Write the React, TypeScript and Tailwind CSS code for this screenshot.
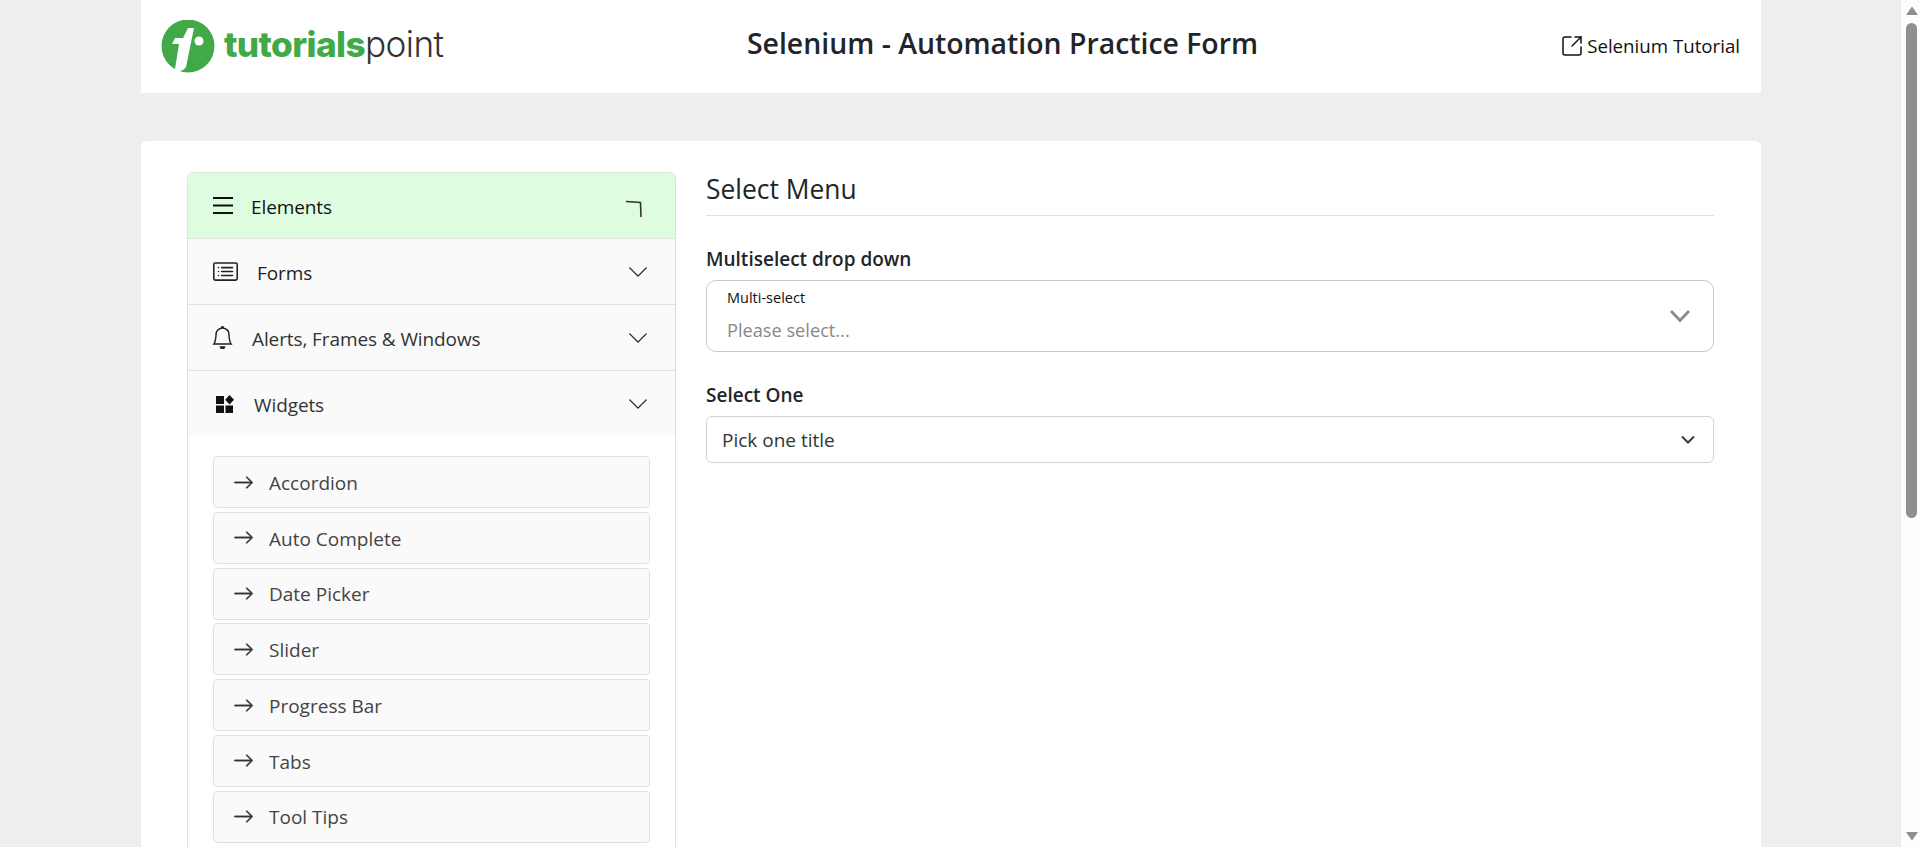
import { BsArrowRight, BsBell, BsCardList, BsChevronDown } from 'react-icons/bs';
import { SquareArrowOutUpRight } from 'lucide-react';
import type { ReactNode } from 'react';

const sans = 'font-["Open_Sans","Noto_Sans",sans-serif]';

const widgets = ['Accordion', 'Auto Complete', 'Date Picker', 'Slider', 'Progress Bar', 'Tabs', 'Tool Tips'];

function Logo() {
  return (
    <div className="flex items-center ml-[20px]">
      <svg width="54" height="53" viewBox="0 0 54 53" className="shrink-0">
        <circle cx="27" cy="26" r="26.5" fill="#41a947" />
        <path d="M27 8 L22 18 L14 18 L11 24 L18 24 L14 49 L16 52 C21 51 24 49 25 47 L33 8 Z" fill="#fff" />
        <circle cx="38" cy="21" r="4.5" fill="#fff" />
      </svg>
      <div className='ml-[9px] font-["Inter",sans-serif] text-[35.200px] leading-none tracking-[-0.6px] pb-[4px]'>
        <span className="font-extrabold text-[#41a947]">tutorials</span>
        <span className="font-light text-[#333]">point</span>
      </div>
    </div>
  );
}

function MenuIconList() {
  return (
    <svg width="20" height="17" viewBox="0 0 20 17" className="shrink-0">
      <path d="M0 1h20M0 8.5h20M0 16h20" stroke="#111" strokeWidth="1.8" />
    </svg>
  );
}

function MenuIconWidgets() {
  return (
    <svg width="18" height="18" viewBox="0 0 18 18" className="shrink-0">
      <path d="M0 1h8v8h-8zM0 10.500h8v7.500h-8zM9.500 10.500h7.500v7.500h-7.500z" fill="#111" />
      <path d="M13.500 0l4.500 4.800-4.500 4.700-4.300-4.700z" fill="#111" />
    </svg>
  );
}

function AccordionRow({ icon, label, textClass, chevron, rowClass }: { icon: ReactNode; label: string; textClass: string; chevron: ReactNode; rowClass: string }) {
  return (
    <div className={`flex items-center h-[66px] pl-[25px] pr-[26px] border-b border-[#e0e0e0] ${rowClass}`}>
      {icon}
      <span className={`text-[19px] tracking-[-0.1px] pt-[3px] ${textClass}`}>{label}</span>
      <div className="ml-auto">{chevron}</div>
    </div>
  );
}

function Accordion() {
  const down = <BsChevronDown size={22} className="text-[#222]" />;
  return (
    <div className="w-[489px] shrink-0 border border-[#e0e0e0] rounded-t-md">
      <AccordionRow
        rowClass="bg-[#defde0] rounded-t-md"
        icon={<MenuIconList />}
        label="Elements"
        textClass="ml-[18px] text-[#111]"
        chevron={
          <svg width="22" height="22" viewBox="0 0 22 22" className="mr-[5px]">
            <path d="M4 6.500 L18.500 7.500 L19 22" fill="none" stroke="#333" strokeWidth="1.600" />
          </svg>
        }
      />
      <AccordionRow
        rowClass="bg-[#fafafa]"
        icon={<BsCardList size={25} className="shrink-0 text-[#222]" />}
        label="Forms"
        textClass="ml-[19px] text-[#222]"
        chevron={down}
      />
      <AccordionRow
        rowClass="bg-[#fafafa]"
        icon={<BsBell size={23} className="shrink-0 -ml-[2px] text-[#222]" />}
        label="Alerts, Frames & Windows"
        textClass="ml-[18px] text-[#333]"
        chevron={down}
      />
      <AccordionRow
        rowClass="bg-[#fafafa] border-b-0"
        icon={<div className="ml-[3px]"><MenuIconWidgets /></div>}
        label="Widgets"
        textClass="ml-[20px] text-[#333]"
        chevron={down}
      />
      {/* body overlaps the last header by a pixel, that row is 65px in the reference */}
      <div className="relative -mt-[1px] bg-white px-[25px] pt-[20px] flex flex-col gap-[3.75px]">
        {widgets.map((w) => (
          <div key={w} className="h-[52px] flex items-center pl-[19px] bg-[#fafafa] border border-[#e0e0e0] rounded">
            <BsArrowRight size={21} stroke="currentColor" strokeWidth={0.3} className="shrink-0 text-[#333]" />
            <span className="ml-[15px] pt-[2px] text-[19px] text-[#444]">{w}</span>
          </div>
        ))}
      </div>
    </div>
  );
}

function SelectForm() {
  return (
    <div className="w-[1008px] shrink-0 text-[#212529]">
      <h2 className="pt-[1px] text-[26.400px] leading-[32px] pb-[10px] border-b border-[#dee2e6]">Select Menu</h2>
      <div className="mt-[32px] text-[19px] leading-[22px] font-semibold">Multiselect drop down</div>
      <div className="mt-[10px] h-[72px] border border-[#c8c8c8] rounded-[10px] pl-[20px] pr-[12px] flex items-center justify-between">
        <div>
          <div className="text-[14.500px] leading-[20px] text-[#111] -mt-[2px]">Multi-select</div>
          <div className="mt-[10px] text-[18.200px] leading-[24px] text-[#888]">Please select...</div>
        </div>
        <svg width="22" height="14" viewBox="0 0 22 14" className="mr-[10px]">
          <path d="M2 2 L11 11.500 L20 2" fill="none" stroke="#8b8b8b" strokeWidth="2.800" />
        </svg>
      </div>
      <div className="mt-[32px] text-[19px] leading-[22px] font-semibold">Select One</div>
      <div className="mt-[10px] h-[47px] border border-[#ced4da] rounded-md pl-[15px] pr-[17px] flex items-center justify-between">
        <span className="pt-[2px] text-[19px] text-[#333]">Pick one title</span>
        <svg width="16" height="12" viewBox="0 0 16 12">
          <path d="M2 2.500 L8 8.500 L14 2.500" fill="none" stroke="#343a40" strokeWidth="2" />
        </svg>
      </div>
    </div>
  );
}

function Scrollbar() {
  return (
    <div className="w-[19px] shrink-0 h-full bg-[#fdfdfd] flex flex-col items-center relative">
      <svg width="14" height="10" viewBox="0 0 14 10" className="mt-[6px] ml-[2px]">
        <path d="M7 0.500 L13 9 L1 9 Z" fill="#8f8f8f" />
      </svg>
      <div className="mt-[7px] ml-[2px] w-[11px] h-[495px] bg-[#8f8f8f] rounded-full" />
      <svg width="14" height="10" viewBox="0 0 14 10" className="mt-auto mb-[6px] ml-[2px]">
        <path d="M1 1 L13 1 L7 9.500 Z" fill="#8f8f8f" />
      </svg>
    </div>
  );
}

export default function App() {
  return (
    <div className={`h-screen flex overflow-hidden bg-[#eeeeee] ${sans}`}>
      <div className="flex-1 min-w-0 overflow-hidden">
        <div className="ml-[141px] w-[1620px]">
          <header className="h-[93px] bg-white flex items-center relative">
            <Logo />
            <h1 className="absolute left-0 right-0 text-center pb-[7px] pl-[103px] text-[28.400px] font-semibold text-[#212529]">
              Selenium - Automation Practice Form
            </h1>
            <a className="ml-auto mr-[21px] flex items-center text-[18.700px] text-[#111]">
              <SquareArrowOutUpRight size={24} strokeWidth={1.5} className="mr-[3px]" />
              Selenium Tutorial
            </a>
          </header>
          <main className="mt-[48px] h-[800px] bg-white rounded-md pl-[46px] pt-[31px] flex gap-[30px]">
            <Accordion />
            <SelectForm />
          </main>
        </div>
      </div>
      <Scrollbar />
    </div>
  );
}
